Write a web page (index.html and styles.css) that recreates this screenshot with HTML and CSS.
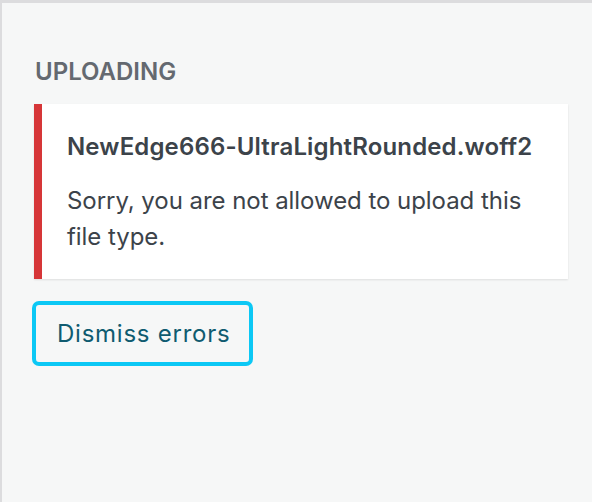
FILE: index.html
```html
<!DOCTYPE html>
<html lang="en">
<head>
<meta charset="utf-8">
<title>Uploading</title>
<link rel="stylesheet" href="styles.css">
</head>
<body>
<div class="panel">
  <h2 class="panel-title">Uploading</h2>
  <div class="notice notice-error">
    <div class="notice-file">NewEdge666-UltraLightRounded.woff2</div>
    <p class="notice-msg">Sorry, you are not allowed to upload this file type.</p>
  </div>
  <button class="btn-dismiss" type="button">Dismiss errors</button>
</div>
</body>
</html>
```

FILE: styles.css
```css
html, body {
  margin: 0;
  padding: 0;
  height: 100%;
}
body {
  background: #f6f7f7;
  font-family: Inter, "Noto Sans", sans-serif;
  color: #3c434a;
}
.panel {
  box-sizing: border-box;
  height: 100%;
  border-top: 3px solid #dcdcde;
  border-left: 2px solid #dcdcde;
  padding: 51px 24px 0 32px;
  display: flex;
  flex-direction: column;
  align-items: flex-start;
}
.panel-title {
  margin: 0 0 0 1px;
  font-size: 24px;
  line-height: 36px;
  font-weight: 600;
  text-transform: uppercase;
  color: #646970;
}
.notice {
  align-self: stretch;
  margin-top: 14px;
  background: #fff;
  border-left: 8px solid #d63638;
  box-shadow: 0 1px 2px rgba(0, 0, 0, 0.1);
  padding: 25px 24px 24px 25px;
}
.notice-file {
  font-size: 24px;
  line-height: 36px;
  font-weight: 600;
  letter-spacing: 0.15px;
  color: #3c434a;
}
.notice-msg {
  margin: 18px 0 0;
  font-size: 24px;
  line-height: 36px;
  letter-spacing: -0.05px;
  color: #3c434a;
}
.btn-dismiss {
  margin-top: 24px;
  box-sizing: border-box;
  height: 61px;
  width: 217px;
  padding: 0 0 0 21px;
  text-align: left;
  background: #f6f7f7;
  border: 2px solid #0cc8f5;
  box-shadow: 0 0 0 2px #0cc8f5;
  border-radius: 5px;
  font-family: Inter, "Noto Sans", sans-serif;
  font-size: 24px;
  letter-spacing: 0.75px;
  color: #0f5b70;
  cursor: pointer;
}
```
